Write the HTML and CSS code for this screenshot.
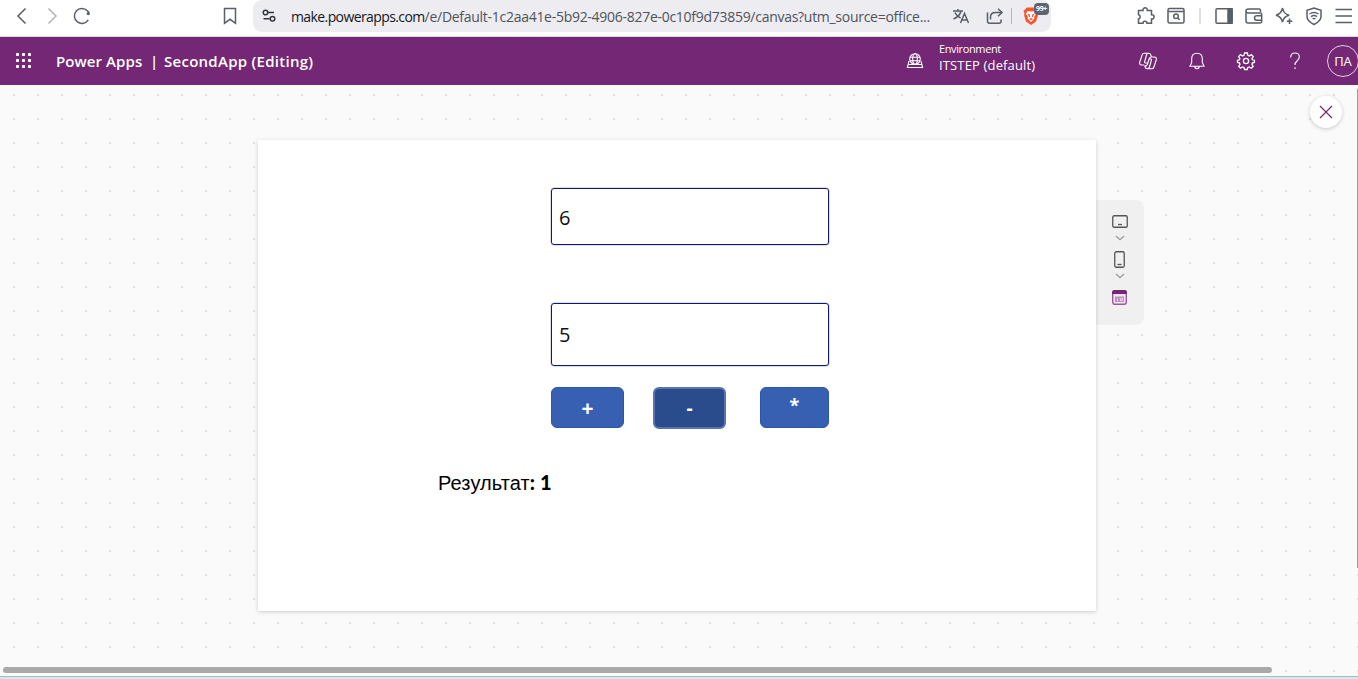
FILE: index.html
```html
<!DOCTYPE html>
<html lang="en">
<head>
<meta charset="utf-8">
<title>SecondApp (Editing) - Power Apps</title>
<link rel="stylesheet" href="styles.css">
</head>
<body>
<div class="browser">
  <nav class="nav">
    <svg class="ic" viewBox="0 0 20 20"><path d="M13.500 2.500 6 10l7.500 7.500"/></svg>
    <svg class="ic faded" viewBox="0 0 20 20"><path d="M6.500 2.500 14 10l-7.500 7.500"/></svg>
    <svg class="ic" viewBox="0 0 20 20"><path d="M16.300 13.800A7.500 7.500 0 1 1 15.300 4.700L17 6.500"/><circle cx="16.300" cy="7.600" r="1.700" fill="#5a5e66" stroke="none"/></svg>
  </nav>
  <svg class="ic bookmark" viewBox="0 0 20 20"><path d="M4.500 2.500h11v14.800L10 13.300l-5.500 4z"/></svg>
  <div class="address">
    <svg class="ic tune" viewBox="0 0 20 20"><circle cx="6.500" cy="6.500" r="2.300"/><path d="M9 6.500h6M4.500 12.800h6"/><circle cx="13.500" cy="12.800" r="2.300"/></svg>
    <span class="url"><b>make.powerapps.com</b>/e/Default-1c2aa41e-5b92-4906-827e-0c10f9d73859/canvas?utm_source=office...</span>
    <svg class="ic translate" viewBox="0 0 20 20"><path d="M2 5h10M7 3v2M10 5c-.8 3.500-3.800 6.500-7.500 8M4 6.500c1 2.500 3.500 4.500 5.500 5.500M9.500 17l4-9.500 4 9.500M11 14h5"/></svg>
    <svg class="ic share" viewBox="0 0 20 20"><path d="M2.500 6.500v8.500q0 2.300 2.300 2.300h9q2.300 0 2.300-2.300V13.500M5.500 13.500V11q0-4.500 5-4.500h6M13 2.800l4 3.700-4 3.700"/></svg>
    <i class="rule"></i>
    <span class="brave"><svg viewBox="0 0 16 18"><path fill="#fb542b" d="M4 .5h8l1.500 1.500 2 2-1 2.500.4 2-1.900 6L8 18l-5-3.500-1.900-6 .4-2L.5 4l2-2z"/><path fill="#fff" d="m4.500 4 3.500.5 3.500-.5 1.500 3-2 3 .5 1.500L8 15l-3.500-3.500L5 10 3 7z"/><path fill="#fb542b" d="m4.500 6.700 2.300.8.5 3-1.300-.8zM11.500 6.700l-2.300.8-.5 3 1.300-.8zM6 12l2-1 2 1-2 1.300z"/></svg><em>99+</em></span>
  </div>
  <div class="tools">
    <svg class="ic" viewBox="0 0 20 20"><path d="M2.500 4.500H7a2.200 2.200 0 1 1 4.300 0h4.200v4.200a2.200 2.200 0 1 1 0 4.300v4.300H11a2 2 0 0 0-4 0H2.500V13a2.200 2.200 0 0 0 0-4.300z"/></svg>
    <svg class="ic" viewBox="0 0 20 20"><rect x="2" y="2.500" width="16" height="14.500" rx="1.500"/><path d="M2 5.500h16"/><circle cx="10" cy="10.300" r="2.300"/><path d="m11.700 12 2 2"/></svg>
    <i class="rule"></i>
    <svg class="ic" viewBox="0 0 20 20"><rect x="2" y="2.700" width="16" height="14.600" rx="1"/><path fill="#5a5e66" d="M14 2.700H18v14.600h-4z"/></svg>
    <svg class="ic" viewBox="0 0 20 20"><path d="M16.500 6V4.500q0-1.500-1.500-1.500H4.300Q2 3 2 5t2.300 2H16q1.700 0 1.700 1.500v6.800q0 1.700-1.700 1.700H4q-2 0-2-2V5"/><path d="M17.700 9.800h-5a2.200 2.200 0 0 0 0 4.400h5"/></svg>
    <svg class="ic" viewBox="0 0 20 20"><path d="M8.500 2q1 6 6.700 7.200-5.700 1.300-6.700 7Q7.300 10.500 2 9.200 7.300 8 8.500 2zM15.500 12.500v5.500M12.800 15.200h5.500"/></svg>
    <svg class="ic" viewBox="0 0 20 20"><path d="M10 2 17 4.200v6.300q0 4.500-7 8-7-3.500-7-8V4.200z"/><path d="M5.500 8q4.500-3 9 0M7 10.600q3-2 6 0M8.600 12.900q1.400-.8 2.800 0"/></svg>
    <svg class="ic" viewBox="0 0 20 20"><path d="M1.500 3.500h16.500M1.500 10h16.500M1.500 16.500h16.500"/></svg>
  </div>
</div>

<header class="suite">
  <svg class="waffle" viewBox="0 0 16 16"><g><rect width="3" height="3" rx=".8"/><rect x="6" width="3" height="3" rx=".8"/><rect x="12" width="3" height="3" rx=".8"/><rect y="6" width="3" height="3" rx=".8"/><rect x="6" y="6" width="3" height="3" rx=".8"/><rect x="12" y="6" width="3" height="3" rx=".8"/><rect y="12" width="3" height="3" rx=".8"/><rect x="6" y="12" width="3" height="3" rx=".8"/><rect x="12" y="12" width="3" height="3" rx=".8"/></g></svg>
  <div class="brand"><span class="product">Power Apps</span><span class="bar">|</span><span class="appname">SecondApp (Editing)</span></div>
  <div class="environment">
    <svg class="wic" viewBox="0 0 20 20"><circle cx="10" cy="8" r="5.300"/><ellipse cx="10" cy="8" rx="2.300" ry="5.300"/><path d="M5 6.300h10M5 9.700h10M4 10l-1.600 6.500h15.200L16 10M3.500 13.500h13"/></svg>
    <div><div class="env-label">Environment</div><div class="env-name">ITSTEP (default)</div></div>
  </div>
  <div class="actions">
    <svg class="wic" viewBox="0 0 20 20"><path d="M13.300 5.500 12.800 4q-.5-1.800-2.300-1.800H6.300q-1.700 0-2.200 1.800L1.800 11q-.8 3 1.900 3h2.500M6.700 14.500l.5 1.500q.5 1.800 2.300 1.800h4.200q1.700 0 2.200-1.800l2.300-7q.8-3-1.900-3h-3q-1.500 0-2 1.500l-2 6q-.6 1.500-2 1.500H6.200M10.500 2.200Q9 2.200 8.500 4L6.700 10.500q-.5 1.500.5 1.500h2.500M9.500 17.800q1.500 0 2-1.800l1.800-6.500q.5-1.500-.5-1.500H11"/></svg>
    <svg class="wic" viewBox="0 0 20 20"><path d="M10 2.300q-5.300 0-5.300 5.500v3.700L3 15.200h14l-1.700-3.700V7.800q0-5.500-5.300-5.500zM7.700 15.300a2.300 2.300 0 0 0 4.600 0"/></svg>
    <svg class="wic gear" viewBox="0 0 20 20"><path d="m8.500 2-.5 2.300-1.500.6-2-1.300-1.900 2 1.300 2-.6 1.300-1.800.3v2.200l1.900.5.6 1.400-1.300 2 1.800 1.900 2-1.300 1.500.6.500 2h2.800l.5-2 1.500-.6 2 1.300 1.900-1.900-1.300-2 .6-1.400 1.900-.5V9.200l-2-.4-.5-1.200 1.300-2-1.800-2-2 1.300-1.500-.6-.5-2.300z"/><circle cx="10" cy="10" r="2.600"/></svg>
    <svg class="wic" viewBox="0 0 20 20"><path d="M5.700 6.500q0-4.500 4.300-4.500t4.300 4q0 2-2.300 4-2 1.700-2 4"/><path d="M10 16.300v1.700"/></svg>
    <span class="avatar">ПА</span>
  </div>
</header>

<main class="workspace">
  <section class="screen">
    <div class="field first">6</div>
    <div class="field second">5</div>
    <div class="buttons">
      <button class="op plus">+</button>
      <button class="op minus">-</button>
      <button class="op times">*</button>
    </div>
    <p class="result"><span>Результат</span><b>: 1</b></p>
  </section>
  <aside class="devices">
    <svg class="landscape" viewBox="0 0 16 13"><rect x=".75" y=".75" width="14.500" height="11.500" rx="1.300"/><path d="M6 9.500h4"/></svg>
    <svg class="chev" viewBox="0 0 10 6"><path d="m1 1 4 3.700L9 1"/></svg>
    <svg class="portrait" viewBox="0 0 11 17"><rect x=".75" y=".75" width="9.500" height="15.500" rx="1.500"/><path d="M3.500 13.500h4"/></svg>
    <svg class="chev" viewBox="0 0 10 6"><path d="m1 1 4 3.700L9 1"/></svg>
    <svg class="formicon" viewBox="0 0 15 15"><rect x=".7" y=".7" width="13.600" height="13.600" rx="2.200" fill="#f3e6f3" stroke="#9b579b" stroke-width="1.400"/><path d="M0 4V2.500Q0 0 2.500 0h10Q15 0 15 2.500V4z" fill="#742774" stroke="none"/><path d="M3 6.500h9V12H3z" fill="#c08fc1" stroke="none"/><path d="M5.500 11V8.500M8.500 8.500h2v2h-2z" fill="none" stroke="#f3e6f3" stroke-width=".8"/></svg>
  </aside>
  <button class="close"><svg viewBox="0 0 14 14"><path d="m1 1 12 12M13 1 1 13"/></svg></button>
  <i class="vscroll"></i>
  <i class="hscroll"></i>
  <i class="edge"></i>
</main>
</body>
</html>
```
FILE: styles.css
```css
* { box-sizing: border-box; }
body { margin: 0; width: 1358px; height: 679px; overflow: hidden; display: flex; flex-direction: column; font-family: "Open Sans", "Noto Sans", sans-serif; background: #fafafa; }
svg { display: block; flex: none; overflow: visible; }
button { padding: 0; border: 0; font: inherit; }

/* browser toolbar */
.browser { height: 37px; flex: none; display: flex; background: #fff; border-bottom: 1px solid #dcdcdc; padding: 0 4px 4px 12px; align-items: center; }
.ic { width: 20px; height: 20px; fill: none; stroke: #5a5e66; stroke-width: 1.5; }
.faded { stroke: #b4b4b8; }
.nav { display: flex; gap: 10px; }
.bookmark { margin-left: 128px; }
.address { flex: none; margin-left: 13px; width: 798px; height: 32px; padding-left: 6px; display: flex; align-items: center; border-radius: 9px; background: #ececf1; }
.tune { stroke: #33363d; }
.url { flex: none; margin-left: 12px; width: 647px; font-size: 14px; letter-spacing: -.28px; white-space: nowrap; color: #50535a; }
.url b { font-weight: 400; letter-spacing: -.6px; color: #16171b; }
.translate { margin-left: 13px; }
.share { margin-left: 14px; }
.rule { width: 1px; height: 16px; background: #b5b5bb; flex: none; }
.address .rule { margin-left: 6px; }
.brave { position: relative; margin-left: 11px; width: 16px; height: 18px; }
.brave em { position: absolute; left: 11px; top: -4px; width: 15px; height: 12px; border-radius: 4px; background: #61636e; color: #fff; font: 700 7px/12px "Open Sans", sans-serif; text-align: center; letter-spacing: -.3px; }
.tools { margin-left: 85px; display: flex; align-items: center; gap: 10px; }
.tools .rule { width: 2px; margin: 0 3px; background: #dfe0e4; }

/* suite header */
.suite { height: 48px; flex: none; display: flex; align-items: center; padding-left: 16px; background: #742774; color: #fff; }
.waffle { width: 16px; height: 16px; fill: #fff; }
.brand { flex: none; margin-left: 24px; width: 849px; display: flex; font-size: 15px; font-weight: 600; white-space: nowrap; }
.product { width: 94px; letter-spacing: .08px; }
.bar { width: 14px; }
.appname { letter-spacing: .27px; }
.environment { flex: none; display: flex; align-items: center; gap: 14px; width: 233px; white-space: nowrap; }
.env-label { font-size: 11px; line-height: 14px; letter-spacing: -.4px; letter-spacing: -.38px; }
.env-name { font-size: 13px; line-height: 18px; letter-spacing: .15px; }
.environment > div { margin-top: -7px; }
.env-label { letter-spacing: -.38px; }
.wic { width: 20px; height: 20px; fill: none; stroke: #fff; stroke-width: 1.1; }
.gear { stroke-width: 1.3; }
.actions { flex: none; display: flex; align-items: center; gap: 29px; }
.avatar { width: 32px; height: 32px; margin-left: -7px; flex: none; border: 1px solid #e3cde3; border-radius: 50%; font-size: 13px; line-height: 31px; text-align: center; }

/* canvas area */
.workspace { flex: 1; position: relative; display: flex; align-items: flex-start; padding: 55px 0 0 258px; background: conic-gradient(from 90deg at 22px 22px, #dfdfdf 25%, transparent 0) -9px -13px / 24px 24px, #fafafa; }
.screen { width: 838px; height: 471px; padding: 48px 0 0 293px; background: #fff; box-shadow: 0 1px 4px rgba(0,0,0,.18); z-index: 1; }
.field { width: 278px; padding-left: 7px; border: 1px solid #0c1a72; box-shadow: 0 0 0 .5px rgba(12,26,114,.3); border-radius: 3px; font-size: 20px; color: #111; }
.first { height: 57px; line-height: 58px; }
.second { height: 63px; margin-top: 58px; line-height: 62px; }
.buttons { display: flex; margin-top: 21px; }
.op { height: 41px; border: 1px solid #2f57a4; border-radius: 6px; background: #3860b2; color: #fff; font-size: 19px; font-weight: 700; line-height: 40px; }
.plus { width: 73px; font-size: 21px; }
.minus { width: 73px; height: 42px; margin-left: 29px; border: 2px solid #5a75ab; background: #2b4c8c; line-height: 38px; }
.times { width: 69px; margin-left: 34px; font-size: 18px; line-height: 35px; padding-bottom: 4px; }
.result { margin: 40px 0 0 -113px; line-height: 26px; font-size: 20px; letter-spacing: .1px; color: #000; white-space: nowrap; }
.result span { font-family: "Liberation Sans", sans-serif; }
.result b { font-family: Lato, sans-serif; font-weight: 900; }

/* device switcher */
.devices { margin-top: 60px; width: 48px; height: 125px; padding-top: 15px; display: flex; flex-direction: column; align-items: center; border-radius: 0 8px 8px 0; background: #f0f0f0; fill: none; stroke: #555; stroke-width: 1.3; }
.landscape { width: 16px; height: 13px; }
.chev { width: 10px; height: 6px; stroke: #999; margin-top: 7px; }
.portrait { width: 11px; height: 17px; margin: 10px 1px 0 0; }
.portrait + .chev { margin-top: 5px; }
.formicon { width: 15px; height: 15px; margin: 11px 1px 0 0; }

/* overlays */
.close { position: absolute; left: 1310px; top: 11px; width: 32px; height: 32px; display: grid; place-items: center; border-radius: 50%; background: #fff; box-shadow: 0 1px 4px rgba(0,0,0,.2); }
.close svg { width: 14px; height: 14px; stroke: #742774; stroke-width: 1.2; }
.vscroll { position: absolute; right: 0; top: 4px; width: 1px; height: 479px; background: #999; }
.hscroll { position: absolute; left: 3px; top: 582px; width: 1269px; height: 6px; border-radius: 3px; background: #a9a9a9; }
.edge { position: absolute; left: 0; right: 0; bottom: 0; height: 3px; border-top: 1px solid #a9bac2; background: #d2eaf1; }
```
